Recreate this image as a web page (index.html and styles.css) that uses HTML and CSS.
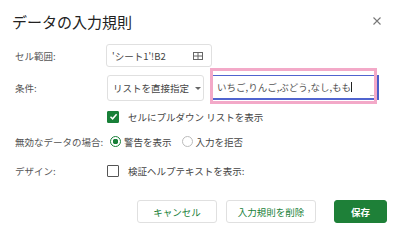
FILE: index.html
```html
<!DOCTYPE html>
<html lang="ja">
<head>
    <meta charset="UTF-8">
    <title>データの入力規則</title>
    <link rel="stylesheet" href="styles.css">
</head>
<body>
    <div class="dialog">
        <div class="head">
            <h1>データの入力規則</h1>
            <button class="close" aria-label="閉じる">
                <svg width="8" height="8" viewBox="0 0 8 8"><path d="M0.5 0.5 L7.5 7.5 M7.5 0.5 L0.5 7.5" stroke="#777" stroke-width="1.1"/></svg>
            </button>
        </div>

        <div class="row row-range">
            <div class="label">セル範囲:</div>
            <div class="range-box">
                <span>'シート1'!B2</span>
                <svg class="grid-icon" width="10" height="8" viewBox="0 0 10 8"><rect x="0.5" y="0.5" width="9" height="7" fill="none" stroke="#666"/><path d="M5 0.5 V7.5 M0.5 4 H9.5" stroke="#666"/></svg>
            </div>
        </div>

        <div class="row row-cond">
            <div class="label">条件:</div>
            <div class="select">リストを直接指定<span class="caret"></span></div>
            <div class="list-wrap">
                <div class="list-input">いちご,りんご,ぶどう,なし,もも<span class="cursor"></span><span class="grip"></span></div>
                <div class="mark"></div>
            </div>
        </div>

        <div class="row row-check">
            <div class="label"></div>
            <span class="box on">
                <svg width="9" height="9" viewBox="0 0 9 9"><path d="M1.5 4.8 L3.6 6.8 L7.6 2.2" fill="none" stroke="#fff" stroke-width="1.5"/></svg>
            </span>
            <span class="opt-text">セルにプルダウン リストを表示</span>
        </div>

        <div class="row row-radio">
            <div class="label">無効なデータの場合:</div>
            <span class="radio on"></span>
            <span class="opt-text">警告を表示</span>
            <span class="radio"></span>
            <span class="opt-text">入力を拒否</span>
        </div>

        <div class="row row-design">
            <div class="label">デザイン:</div>
            <span class="box"></span>
            <span class="opt-text">検証ヘルプテキストを表示:</span>
        </div>

        <div class="actions">
            <button class="btn btn-cancel">キャンセル</button>
            <button class="btn btn-delete">入力規則を削除</button>
            <button class="btn btn-save">保存</button>
        </div>
    </div>
</body>
</html>
```

FILE: styles.css
```css
body {
    margin: 0;
    background: #fff;
    font-family: "Noto Sans CJK JP", "Noto Sans", sans-serif;
    color: #333;
    width: 400px;
    height: 236px;
    overflow: hidden;
}

.dialog {
    padding: 0 13px 0 15px;
}

.head {
    display: flex;
    align-items: center;
    justify-content: space-between;
    height: 42px;
    margin-left: -3px;
}

.head h1 {
    margin: 0;
    font-size: 15px;
    font-weight: normal;
    color: #222;
}

.close {
    border: none;
    background: none;
    padding: 0;
    margin-right: 6px;
    display: flex;
}

.row {
    display: flex;
    align-items: center;
    font-size: 9.5px;
    white-space: nowrap;
}

.label {
    width: 91px;
    flex-shrink: 0;
    color: #555;
}

.row-range {
    margin-top: 2px;
    height: 23px;
}

.range-box {
    box-sizing: border-box;
    width: 106px;
    height: 23px;
    border: 1px solid #e0e0e0;
    border-radius: 3px;
    display: flex;
    align-items: center;
    justify-content: space-between;
    padding: 0 8px 0 5px;
    color: #444;
}

.row-cond {
    margin-top: 8px;
    height: 26px;
}

.select {
    box-sizing: border-box;
    width: 97px;
    height: 26px;
    margin-left: 1px;
    border: 1px solid #e0e0e0;
    border-radius: 3px;
    display: flex;
    align-items: center;
    padding-left: 5px;
    color: #444;
    flex-shrink: 0;
}

.caret {
    margin-left: 6px;
    border-left: 3px solid transparent;
    border-right: 3px solid transparent;
    border-top: 3px solid #666;
}

.list-wrap {
    position: relative;
    margin-left: 7px;
}

.list-input {
    position: relative;
    box-sizing: border-box;
    width: 168px;
    height: 25px;
    margin-top: -1px;
    border-top: 1px solid #5064cf;
    border-bottom: 2px solid #5064cf;
    border-right: 2px solid #4a5ec9;
    padding: 4px 0 0 6px;
    color: #555;
}

.cursor {
    display: inline-block;
    width: 1px;
    height: 10px;
    background: #222;
    vertical-align: -1px;
}

.grip {
    position: absolute;
    right: 2px;
    bottom: 2px;
    width: 4px;
    height: 4px;
    border-right: 1px solid #bbb;
    border-bottom: 1px solid #bbb;
}

.mark {
    position: absolute;
    left: -1px;
    top: -8px;
    width: 161px;
    height: 30px;
    border: 3px solid #f3a9c8;
}

.row-check {
    margin-top: 6px;
    height: 19px;
}

.box {
    box-sizing: border-box;
    width: 12px;
    height: 12px;
    margin-left: 1px;
    border: 1.5px solid #555;
    border-radius: 1px;
    display: flex;
    align-items: center;
    justify-content: center;
}

.box.on {
    background: #188038;
    border-color: #188038;
}

.opt-text {
    margin-left: 9px;
    color: #444;
}

.row-radio {
    margin-top: 6px;
    height: 19px;
}

.radio {
    box-sizing: border-box;
    width: 11px;
    height: 11px;
    margin-left: 4px;
    border-radius: 50%;
    border: 1px solid #bbb;
}

.radio.on {
    border: 1.5px solid #188038;
    background: radial-gradient(circle, #188038 0 2.6px, #fff 3px);
}

.row-radio .opt-text {
    margin-left: 3px;
}

.row-radio .radio + .opt-text + .radio {
    margin-left: 10px;
}

.row-design {
    margin-top: 10px;
    height: 19px;
}

.actions {
    display: flex;
    justify-content: flex-end;
    margin-top: 20px;
}

.btn {
    height: 23px;
    font-family: inherit;
    font-size: 9.5px;
    border-radius: 3px;
    border: 1px solid #e0e0e0;
    background: #fff;
    color: #188038;
    padding: 0;
}

.btn-cancel {
    width: 80px;
}

.btn-delete {
    width: 90px;
    margin-left: 9px;
}

.btn-save {
    width: 53px;
    margin-left: 18px;
    background: #1e8038;
    border-color: #1e8038;
    color: #fff;
    font-weight: bold;
}
```
